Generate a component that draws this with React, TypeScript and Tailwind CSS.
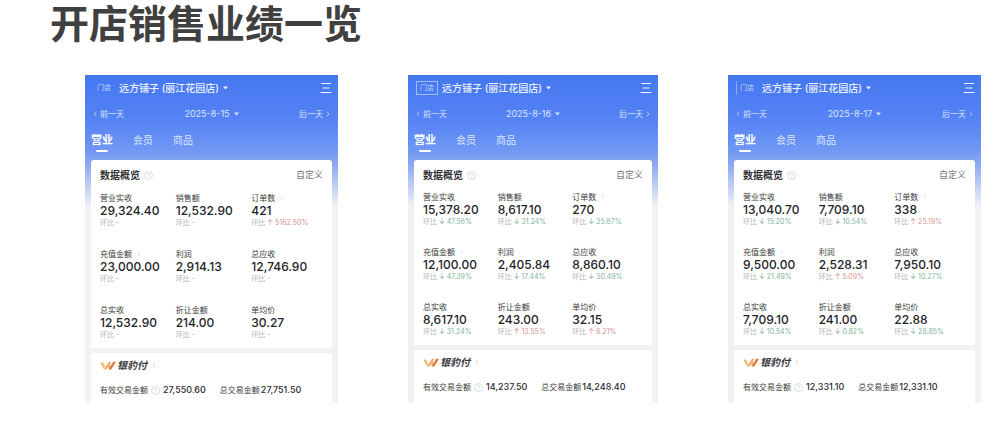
import { clsx } from "clsx";
import { ChevronLeft, ChevronRight } from "lucide-react";

type Metric = {
	label: string;
	value: string;
	trend?: "up" | "down";
	delta?: string;
	more?: boolean;
};

type Report = {
	date: string;
	roomy?: boolean;
	badge: string;
	metrics: Metric[];
	valid: string;
	total: string;
};

const REPORTS: Report[] = [
	{
		date: "2025-8-15",
		roomy: true,
		badge: "border-transparent",
		metrics: [
			{ label: "营业实收", value: "29,324.40" },
			{ label: "销售额", value: "12,532.90" },
			{ label: "订单数", value: "421", trend: "up", delta: "5162.50%", more: true },
			{ label: "充值金额", value: "23,000.00", more: true },
			{ label: "利润", value: "2,914.13" },
			{ label: "总应收", value: "12,746.90" },
			{ label: "总实收", value: "12,532.90" },
			{ label: "折让金额", value: "214.00" },
			{ label: "单均价", value: "30.27" },
		],
		valid: "27,550.60",
		total: "27,751.50",
	},
	{
		date: "2025-8-16",
		badge: "border-white/50",
		metrics: [
			{ label: "营业实收", value: "15,378.20", trend: "down", delta: "47.56%" },
			{ label: "销售额", value: "8,617.10", trend: "down", delta: "31.24%" },
			{ label: "订单数", value: "270", trend: "down", delta: "35.87%", more: true },
			{ label: "充值金额", value: "12,100.00", trend: "down", delta: "47.39%", more: true },
			{ label: "利润", value: "2,405.84", trend: "down", delta: "17.44%" },
			{ label: "总应收", value: "8,860.10", trend: "down", delta: "30.49%" },
			{ label: "总实收", value: "8,617.10", trend: "down", delta: "31.24%" },
			{ label: "折让金额", value: "243.00", trend: "up", delta: "13.55%" },
			{ label: "单均价", value: "32.15", trend: "up", delta: "6.21%" },
		],
		valid: "14,237.50",
		total: "14,248.40",
	},
	{
		date: "2025-8-17",
		badge: "border-transparent border-l-white/40",
		metrics: [
			{ label: "营业实收", value: "13,040.70", trend: "down", delta: "15.20%" },
			{ label: "销售额", value: "7,709.10", trend: "down", delta: "10.54%" },
			{ label: "订单数", value: "338", trend: "up", delta: "25.19%", more: true },
			{ label: "充值金额", value: "9,500.00", trend: "down", delta: "21.49%", more: true },
			{ label: "利润", value: "2,528.31", trend: "up", delta: "5.09%" },
			{ label: "总应收", value: "7,950.10", trend: "down", delta: "10.27%" },
			{ label: "总实收", value: "7,709.10", trend: "down", delta: "10.54%" },
			{ label: "折让金额", value: "241.00", trend: "down", delta: "0.82%" },
			{ label: "单均价", value: "22.88", trend: "down", delta: "28.85%" },
		],
		valid: "12,331.10",
		total: "12,331.10",
	},
];

function Caret() {
	return (
		<svg width="5" height="4" viewBox="0 0 5 4" fill="currentColor" aria-hidden="true">
			<path d="M0 0.5h5L2.5 3.5z" />
		</svg>
	);
}

function InfoMark() {
	return (
		<svg width="9" height="9" viewBox="0 0 9 9" fill="none" stroke="#c9cbcf" strokeWidth="0.7" aria-hidden="true">
			<circle cx="4.5" cy="4.5" r="4" />
			<path d="M3.3 3.6a1.2 1.2 0 1 1 1.7 1.1c-.4.2-.5.4-.5.8M4.5 6.4v.6" />
		</svg>
	);
}

function MenuMark() {
	return (
		<svg width="12" height="12" viewBox="0 0 12 12" fill="none" stroke="currentColor" strokeWidth="1" aria-hidden="true">
			<path d="M1 1.5h10M2.5 6h7M.5 10.5h11" />
		</svg>
	);
}

function PayLogo() {
	return (
		<svg width="16" height="9" viewBox="0 0 16 9" aria-hidden="true">
			<path d="M0 1.5h3.2L5 5l-1 3.4z" fill="#f3bd78" />
			<path d="M4 8.4 9 1h2.4L6.2 8.4z" fill="#efa255" />
			<path d="M6.8 3.4 9 8.4l1.8-2.6L9.6 3z" fill="#f0b070" />
			<path d="M8.6 8.4 13.2.8H16l-4.8 7.6z" fill="#d9793a" />
		</svg>
	);
}

function MetricCell({ metric }: { metric: Metric }) {
	return (
		<div className="whitespace-nowrap">
			<dt className="flex items-center gap-1 text-[8px] leading-3 text-[#3c3d40]">
				{metric.label}
				{metric.more && <ChevronRight size={6} className="text-[#b5b7bb]" />}
			</dt>
			<dd className="text-[12px] leading-[14px] font-medium text-[#222327]">{metric.value}</dd>
			<dd className="text-[7px] leading-[10px] text-[#b0b2b5]">
				环比{" "}
				{metric.delta ? (
					<span className={metric.trend === "up" ? "text-[#d6938b]" : "text-[#83b39a]"}>
						{metric.trend === "up" ? "↑" : "↓"} {metric.delta}
					</span>
				) : (
					"-"
				)}
			</dd>
		</div>
	);
}

function ReportPanel({ report }: { report: Report }) {
	const { roomy } = report;
	return (
		<article className="flex flex-col bg-[#f1f2f4] bg-[linear-gradient(180deg,#4477ef_0px,#5683f5_45px,#7198f3_76px,#8eabf0_90px,#f1f2f4_132px)] px-[6px] pt-[5px]">
			<header className="text-[#edf2ff]">
				<div className="flex h-4 items-center justify-between">
					<div className="flex items-center gap-1">
						<span className={clsx("border px-[3px] text-[7px] leading-3 text-white/70", "ml-[2px]", report.badge)}>
							门店
						</span>
						<button type="button" className="flex items-center gap-1 text-[10px] font-medium whitespace-nowrap">
							<span>远方铺子 (丽江花园店)</span>
							<Caret />
						</button>
					</div>
					<button type="button" aria-label="菜单">
						<MenuMark />
					</button>
				</div>
				<div className="mt-[10px] flex h-4 items-center justify-between text-[8px] text-[#dce6ff]">
					<button type="button" className="flex items-center gap-px">
						<ChevronLeft size={8} />
						前一天
					</button>
					<button type="button" className="flex items-center gap-1 text-[9px]">
						{report.date}
						<Caret />
					</button>
					<button type="button" className="flex items-center gap-px">
						后一天
						<ChevronRight size={8} />
					</button>
				</div>
				<nav className="mt-2 flex items-start gap-5 pb-2 text-[10px] text-[#dce6ff]">
					<button type="button" className="flex flex-col items-center text-[11px] leading-5 font-bold text-white">
						营业
						<span className="h-[2px] w-3 rounded-full bg-white" />
					</button>
					<button type="button" className="leading-5">会员</button>
					<button type="button" className="leading-5">商品</button>
				</nav>
			</header>

			<section className="rounded-t-[3px] bg-white px-[9px] pt-[7px] pb-2">
				<div className="flex h-4 items-center justify-between">
					<h2 className="flex items-center gap-1 text-[10px] font-bold text-[#2f3033]">
						数据概览
						<InfoMark />
					</h2>
					<button type="button" className="text-[9px] text-[#77797d]">自定义</button>
				</div>
				<dl className={clsx("-mr-1 grid grid-cols-3", roomy ? "mt-[9px] gap-y-5" : "mt-2 gap-y-[19px]")}>
					{report.metrics.map((m) => (
						<MetricCell key={m.label} metric={m} />
					))}
				</dl>
			</section>

			<section className="mt-[5px] flex-1 rounded-t-[2px] bg-white px-[9px] pt-1 pb-[5px]">
				<a href="#pay" className="flex h-4 items-center gap-px text-[10px] font-bold text-[#3b3b3d]">
					<PayLogo />
					<span className="italic">银豹付</span>
					<ChevronRight size={8} className="ml-[2px] text-[#c3c5c8]" />
				</a>
				<div className="mt-[9px] flex h-4 items-center gap-[14px] text-[8px] whitespace-nowrap text-[#3c3d40]">
					<div className="flex items-center gap-[3px]">
						有效交易金额
						<InfoMark />
						<span className="text-[9px] font-medium text-[#2b2c30]">{report.valid}</span>
					</div>
					<div className="flex items-center gap-px">
						总交易金额
						<span className="text-[9px] font-medium text-[#2b2c30]">{report.total}</span>
					</div>
				</div>
			</section>
		</article>
	);
}

export default function App() {
	return (
		<main className="min-h-screen bg-white pt-1 pr-5 pb-11 font-['Inter','Noto_Sans_CJK_SC',sans-serif]">
			<h1 className="pl-[50px] text-[39px] leading-10 font-bold text-[#404040]">开店销售业绩一览</h1>
			<div className="mt-[31px] grid grid-cols-[253fr_250fr_253fr] gap-[70px] pl-[85px]">
				{REPORTS.map((r) => (
					<ReportPanel key={r.date} report={r} />
				))}
			</div>
		</main>
	);
}
